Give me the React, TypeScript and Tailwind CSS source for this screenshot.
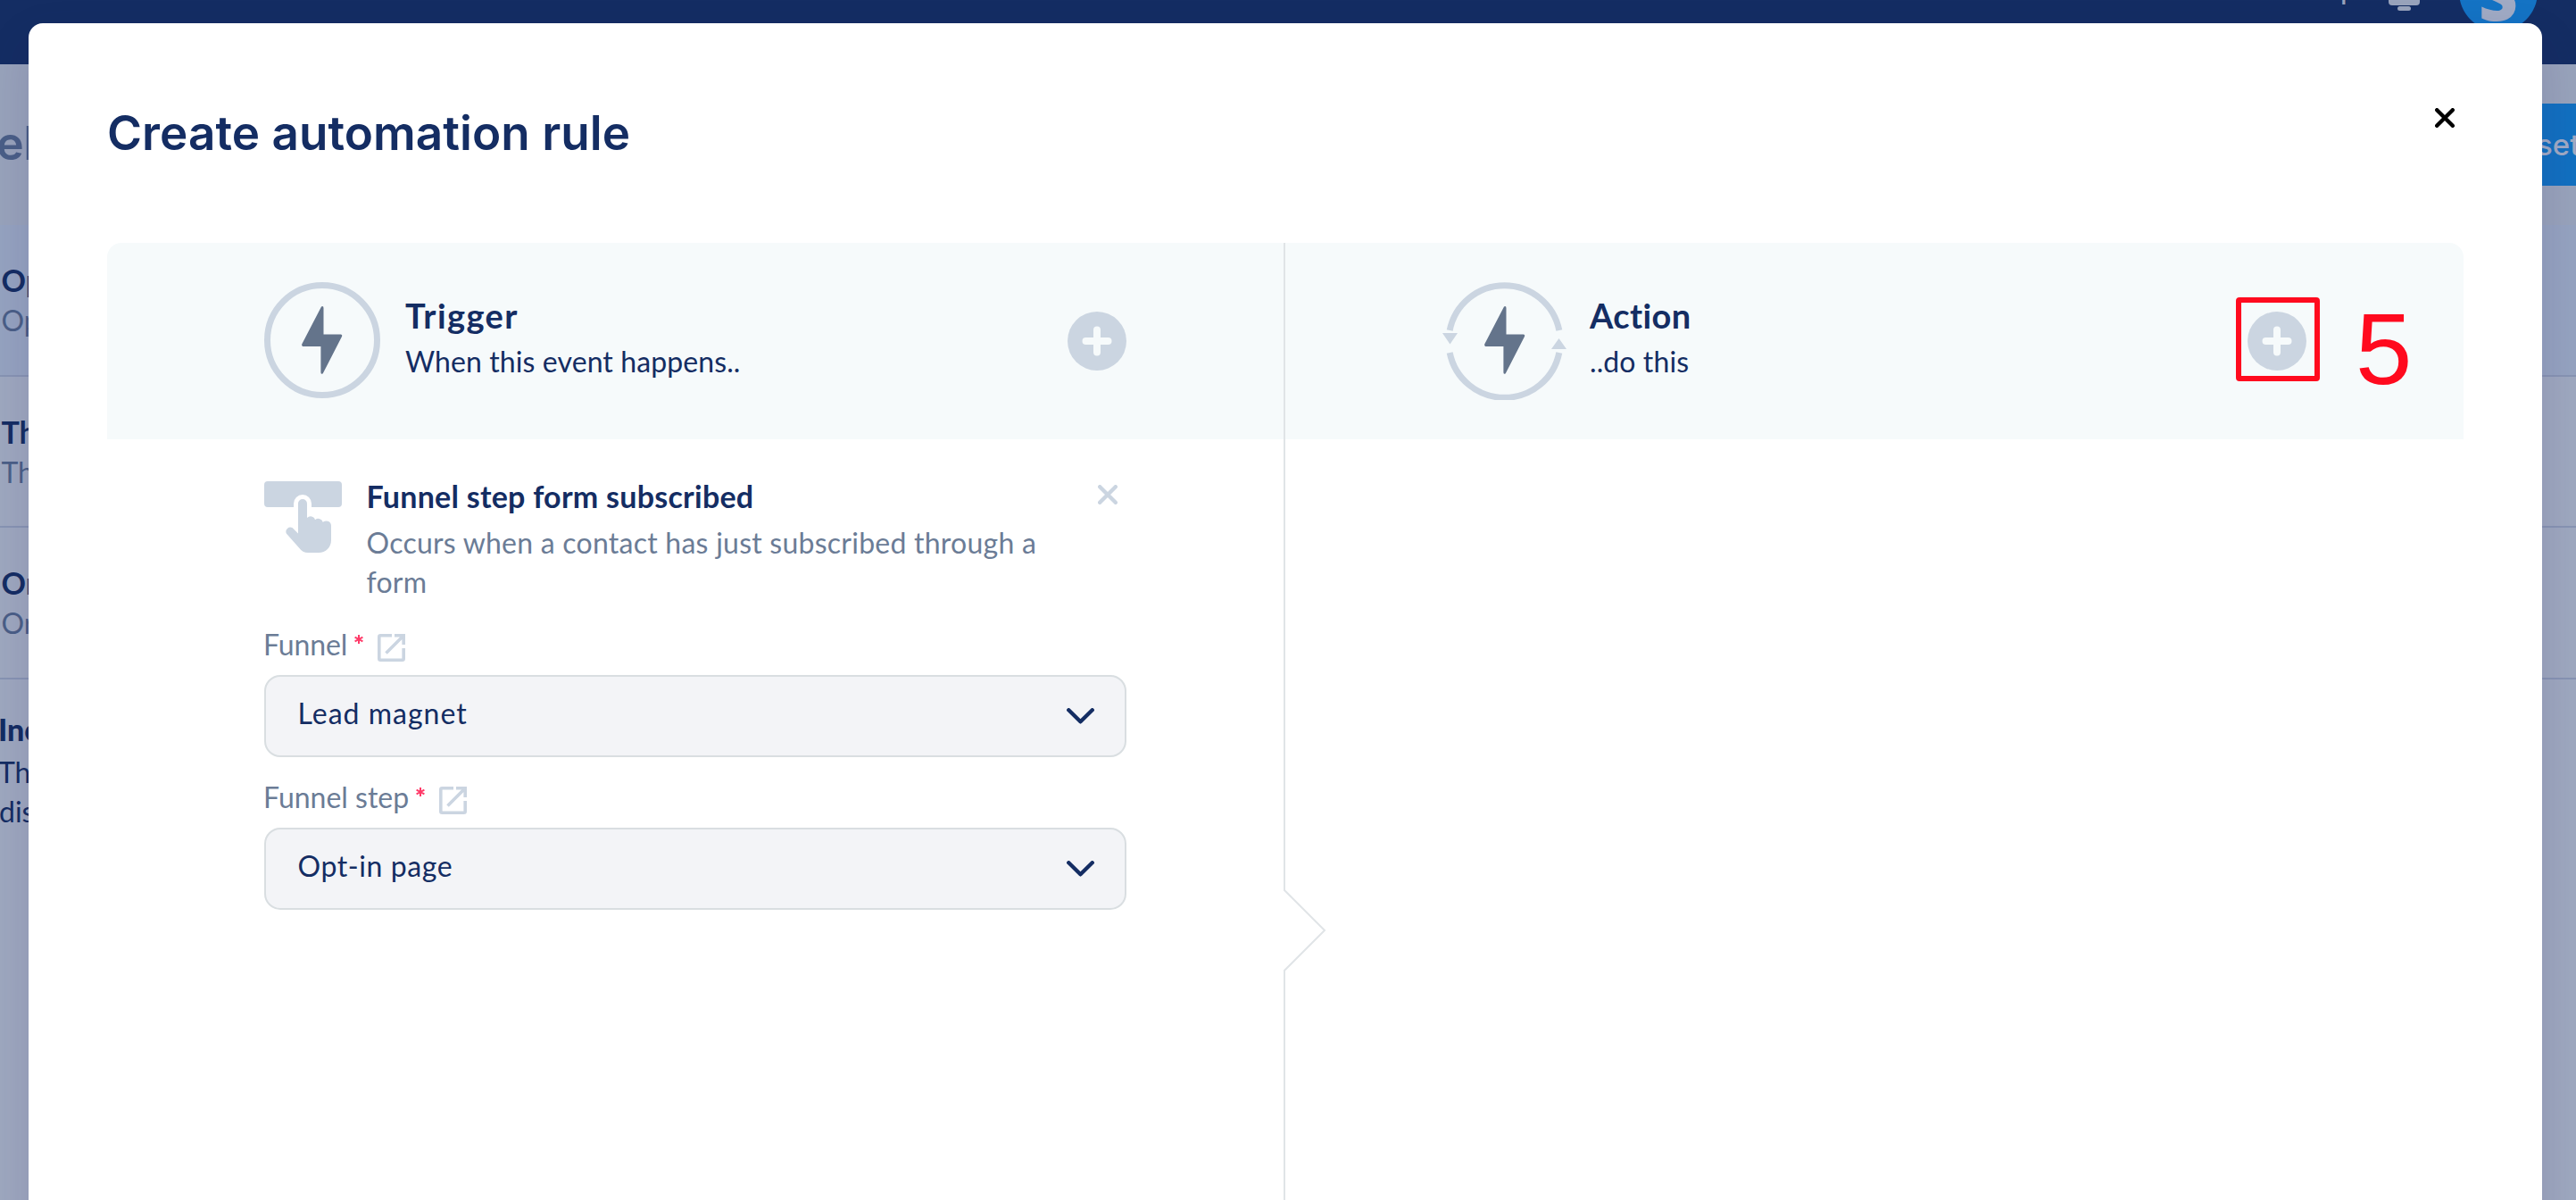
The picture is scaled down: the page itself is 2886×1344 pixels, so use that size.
import React from 'react'
import type { ReactNode } from 'react'

const BOLT =
  'M22 0.4Q24.5 -0.6 24.5 2V31.5H44Q45.8 32 45.1 33.8L23.8 75.2Q21.4 76.8 21.4 74V45H1.2Q-0.4 44.5 0.2 42.6Z'

function TriggerIcon() {
  return (
    <svg className="mt-11 mr-7 h-[130px] w-[130px] shrink-0" viewBox="0 0 130 130">
      <circle cx="65" cy="65" r="61.5" fill="none" stroke="#cbd5e1" strokeWidth="7" />
      <path d={BOLT} transform="translate(42 27)" fill="#64748b" />
    </svg>
  )
}

function ActionIcon() {
  return (
    <svg className="mt-11 mr-[25px] h-[132px] w-[140px] shrink-0" viewBox="0 0 140 132">
      <g fill="none" stroke="#cbd5e1" strokeWidth="7">
        <path d="M8.2 54A62.5 62.5 0 0 1 130.8 54" />
        <path d="M8.2 79A62.5 62.5 0 0 0 130.8 79" />
      </g>
      <path d="M0 57H17L8.5 69.5ZM122 75H139L130.5 63Z" fill="#cbd5e1" />
      <path d={BOLT} transform="translate(47 27)" fill="#64748b" />
    </svg>
  )
}

function PlusButton() {
  return (
    <svg className="block h-[66px] w-[66px]" viewBox="0 0 66 66">
      <circle cx="33" cy="33" r="33" fill="#cbd5e1" />
      <path d="M33 20.5V45.5M20.5 33H45.5" stroke="#f6fafb" strokeWidth="8" strokeLinecap="round" />
    </svg>
  )
}

function FormTapIcon() {
  return (
    <svg className="mt-[5px] h-20 w-[87px] shrink-0" viewBox="0 0 87 80" fill="#cbd5e1">
      <path d="M4 0H83Q87 0 87 4V25Q87 29 83 29H53V25A10 10 0 0 0 33 25V29H4Q0 29 0 25V4Q0 0 4 0Z" />
      <path d="M38 25A5 5 0 0 1 48 25V41Q50 39 53 39.4Q56.2 40 57 43.2Q59.5 41.2 62.3 42.2Q65 43 65.7 45.8Q68.5 43.8 71.5 44.8Q75 46 75 50V66C75 74 69 80 61 80H49Q43 80 39 74.5L24.8 58.5A5 5 0 0 1 31.5 52L38 58.5Z" />
    </svg>
  )
}

function ExternalIcon() {
  return (
    <svg className="mt-2.5 h-[31px] w-[31px]" viewBox="0 0 31 31" fill="none" stroke="#cbd5e1" strokeWidth="3.6">
      <path d="M16 1.8H3.3Q1.8 1.8 1.8 3.3V27.7Q1.8 29.2 3.3 29.2H27.7Q29.2 29.2 29.2 27.7V16" />
      <path d="M19 1.8H29.2V12M28.5 2.5L9.5 21.5" />
    </svg>
  )
}

function Field({ label, value, labelClass, valueClass }: { label: string; value: string; labelClass: string; valueClass: string }) {
  return (
    <div>
      <div className="mb-3 flex h-11">
        <span className={'-ml-px text-[32px] leading-11 text-[#6b7c96] ' + labelClass}>{label}</span>
        <svg className="mt-[11px] mr-4 ml-2 h-2.5 w-2.5" viewBox="0 0 10 10" stroke="#ff3b69" strokeWidth="2">
          <path d="M5 0V10M0.6 2.6L9.4 7.4M9.4 2.6L0.6 7.4" />
        </svg>
        <ExternalIcon />
      </div>
      <div className="flex h-[92px] justify-between rounded-[18px] border-2 border-[#d9dee1] bg-[#f3f4f7] pt-[18.5px] pr-[34px] pl-[35.5px]">
        <span className={'text-[32px] leading-11 text-[#142d63] ' + valueClass}>{value}</span>
        <svg className="mt-[16.5px] h-[18px] w-[31px]" viewBox="0 0 31 18" fill="none" stroke="#142d63" strokeWidth="4.4" strokeLinecap="round" strokeLinejoin="round">
          <path d="M2.3 2.3L15.5 15.3L28.7 2.3" />
        </svg>
      </div>
    </div>
  )
}

function BackRow({ title, text, className }: { title: string; text: string; className: string }) {
  return (
    <div className={'border-b-2 border-[#8794b3] pt-10 pl-[1.5px] ' + className}>
      <p className="text-[34px] leading-11 font-bold text-[#142d63]">{title}</p>
      <p className="mt-px text-[32px] leading-11 text-[#4a5f87]">{text}</p>
    </div>
  )
}

function Head({ icon, title, text, titleClass, children }: { icon: ReactNode; title: string; text: string; titleClass: string; children: ReactNode }) {
  return (
    <div className="flex h-[220px] bg-[#f6fafb]">
      {icon}
      <div className="mt-[59px] flex-1 text-[#142d63]">
        <h2 className={'text-[38px] leading-11 font-bold ' + titleClass}>{title}</h2>
        <p className="mt-2 text-[32px] leading-11 tracking-[0.1px]">{text}</p>
      </div>
      {children}
    </div>
  )
}

export default function App() {
  return (
    <div className="relative h-[1344px] w-[2886px] overflow-hidden bg-[#9ea8bf] font-[Lato,sans-serif]">
      <header className="flex h-[72px] items-start justify-end overflow-hidden bg-[#142d63] pr-[43px]">
        <span className="-mt-[25px] mr-[36px] text-[32px] leading-6 font-medium text-[#98a3bb]">Help</span>
        <svg className="mr-11 h-3 w-[35px]" viewBox="0 0 35 12" fill="#98a3bb">
          <rect y="-8" width="35" height="14" rx="4" />
          <rect x="10" y="7" width="15" height="5" rx="2.5" />
        </svg>
        <div className="-mt-[53px] flex h-[88px] w-[88px] items-center justify-center rounded-full bg-[#1473c4]">
          <span className="mt-1.5 font-['Open_Sans',sans-serif] text-[76px] leading-none font-extrabold text-[#a0aac4]">S</span>
        </div>
      </header>

      <div className="flex h-[180px] items-start justify-between overflow-hidden bg-[#98a3bb] pt-11 font-[Inter,sans-serif]">
        <span className="-ml-[4px] mt-[13px] text-[52px] leading-16 font-semibold tracking-[-0.5px] text-[#4a5f87]">els</span>
        <div className="h-[92px] w-[186px] overflow-hidden bg-[#1270c0] pl-[142px]">
          <span className="text-[33px] leading-[92px] font-medium whitespace-nowrap text-[#a0aac4]">settings</span>
        </div>
      </div>
      <BackRow title="Opt-in" text="Opt-in" className="h-[170px] bg-[#95a3c0]" />
      <BackRow title="Thank" text="Thank" className="h-[169px]" />
      <BackRow title="Order" text="Order" className="h-[170px]" />
      <div className="-ml-[2px] pt-[34px] text-[32px] leading-11 text-[#142d63]">
        <p className="text-[34px] font-black">Inc</p>
        <p className="mt-1">This</p>
        <p className="ml-px">dis</p>
      </div>

      <div className="absolute inset-x-0 top-[26px] mr-[38px] ml-8 h-[1400px] rounded-t-2xl bg-white px-[88px] shadow-[0_20px_50px_rgba(40,20,90,0.14)]">
        <div className="flex h-[246px] items-start justify-between pr-[10px]">
          <h1 className="mt-[91px] font-[Inter,sans-serif] text-[53px] leading-16 font-semibold tracking-[0.05px] text-[#142d63]">Create automation rule</h1>
          <svg className="mt-[94.5px] h-[22px] w-[22px]" viewBox="0 0 22 22" stroke="#000" strokeWidth="4.4" strokeLinecap="round">
            <path d="M2.2 2.2L19.8 19.8M19.8 2.2L2.2 19.8" />
          </svg>
        </div>

        <div className="grid h-[1100px] grid-cols-2">
          <section className="relative border-r-2 border-[#e0e4e7]">
            <div className="rounded-tl-2xl bg-[#f6fafb] pr-44 pl-44">
              <Head icon={<TriggerIcon />} title="Trigger" text="When this event happens.." titleClass="tracking-[1.4px]">
                <div className="mt-[77px]"><PlusButton /></div>
              </Head>
            </div>
            <div className="px-44 pt-[42px]">
              <div className="flex">
                <FormTapIcon />
                <div className="ml-[27.5px] flex-1">
                  <h3 className="text-[34px] leading-11 font-bold tracking-[0.25px] text-[#142d63]">Funnel step form subscribed</h3>
                  <p className="mt-2 w-[770px] text-[32px] leading-11 tracking-[0.24px] text-[#6b7c96]">
                    Occurs when a contact has just subscribed through a form
                  </p>
                </div>
                <svg className="mt-[9px] mr-2.5 h-[22px] w-[22px] shrink-0" viewBox="0 0 22 22" stroke="#cbd5e1" strokeWidth="4.4" strokeLinecap="round">
                  <path d="M2.2 2.2L19.8 19.8M19.8 2.2L2.2 19.8" />
                </svg>
              </div>
              <div className="mt-[26px] flex flex-col gap-[23px]">
                <Field label="Funnel" value="Lead magnet" labelClass="tracking-[-0.1px]" valueClass="tracking-[1px]" />
                <Field label="Funnel step" value="Opt-in page" labelClass="" valueClass="tracking-[0.6px]" />
              </div>
            </div>
            <svg className="absolute top-[723px] -right-[48px] h-[94px] w-[48px]" viewBox="0 0 48 94">
              <path d="M0 2L45 47L0 92Z" fill="#fff" />
              <path d="M0.5 1.5L46 47L0.5 92.5" fill="none" stroke="#e0e4e7" strokeWidth="2" />
            </svg>
          </section>

          <section>
            <div className="rounded-tr-2xl bg-[#f6fafb] pr-[60px] pl-44">
              <Head icon={<ActionIcon />} title="Action" text="..do this" titleClass="tracking-[0.4px]">
                <div className="flex">
                  <div className="mt-[61px] h-[94px] w-[94px] rounded-[4px] border-[6px] border-[#ff0a1e] pt-[10px] pl-[7px]">
                    <PlusButton />
                  </div>
                  <span className="mt-[55px] ml-[40px] w-[61px] font-['Liberation_Sans',sans-serif] text-[114px] leading-[128px] text-[#ff0a1e]">5</span>
                </div>
              </Head>
            </div>
          </section>
        </div>
      </div>
    </div>
  )
}
